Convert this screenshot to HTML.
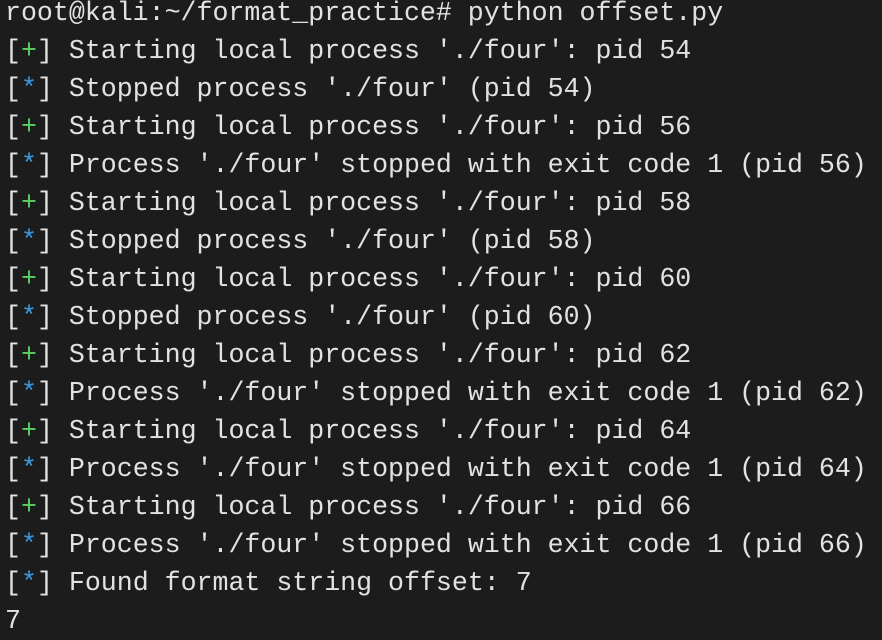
<!DOCTYPE html>
<html><head><style>
html,body{margin:0;padding:0;background:#1c1c1c;width:882px;height:640px;overflow:hidden}
pre{margin:0;position:absolute;left:5px;top:-6px;font-family:"Liberation Mono",monospace;font-size:26.6px;line-height:38px;color:#e2e2e2;white-space:pre}
.g{color:#5ccf64}.b{color:#3a9be3}
</style></head><body><pre>root@kali:~/format_practice# python offset.py
[<span class="g">+</span>] Starting local process './four': pid 54
[<span class="b">*</span>] Stopped process './four' (pid 54)
[<span class="g">+</span>] Starting local process './four': pid 56
[<span class="b">*</span>] Process './four' stopped with exit code 1 (pid 56)
[<span class="g">+</span>] Starting local process './four': pid 58
[<span class="b">*</span>] Stopped process './four' (pid 58)
[<span class="g">+</span>] Starting local process './four': pid 60
[<span class="b">*</span>] Stopped process './four' (pid 60)
[<span class="g">+</span>] Starting local process './four': pid 62
[<span class="b">*</span>] Process './four' stopped with exit code 1 (pid 62)
[<span class="g">+</span>] Starting local process './four': pid 64
[<span class="b">*</span>] Process './four' stopped with exit code 1 (pid 64)
[<span class="g">+</span>] Starting local process './four': pid 66
[<span class="b">*</span>] Process './four' stopped with exit code 1 (pid 66)
[<span class="b">*</span>] Found format string offset: 7
7</pre></body></html>
